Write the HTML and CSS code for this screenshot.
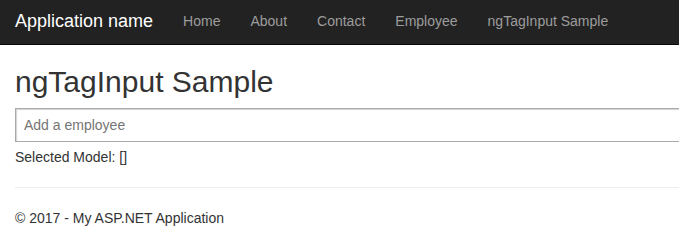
FILE: index.html
```html
<!DOCTYPE html>
<html lang="en">
<head>
  <meta charset="UTF-8" />
  <meta name="viewport" content="width=device-width, initial-scale=1.0" />
  <title>ngTagInput Sample - My ASP.NET Application</title>
  <link rel="stylesheet" href="styles.css">
</head>
<body>
  <div class="navbar">
    <a class="navbar-brand" href="#">Application name</a>
    <ul class="nav">
      <li><a href="#">Home</a></li>
      <li><a href="#">About</a></li>
      <li><a href="#">Contact</a></li>
      <li><a href="#">Employee</a></li>
      <li><a href="#">ngTagInput Sample</a></li>
    </ul>
  </div>

  <div class="body-content">
    <h2>ngTagInput Sample</h2>
    <div class="tags-host">
      <div class="tags">
        <input class="tag-input" type="text" placeholder="Add a employee">
      </div>
    </div>
    <div class="model">Selected Model: []</div>

    <hr />
    <footer>
      <p>&copy; 2017 - My ASP.NET Application</p>
    </footer>
  </div>
</body>
</html>
```

FILE: styles.css
```css
body {
  margin: 0;
  font-family: "Liberation Sans", Arial, sans-serif;
  font-size: 14px;
  line-height: 20px;
  color: #333;
  background-color: #fff;
  overflow: hidden;
}
.navbar {
  display: flex;
  align-items: center;
  height: 44px;
  padding-bottom: 2px;
  box-sizing: border-box;
  height: 45px;
  background-color: #222;
  border-bottom: 1px solid #080808;
}
.navbar-brand {
  padding: 0 15px;
  font-size: 18px;
  color: #fff;
  text-decoration: none;
}
.nav {
  display: flex;
  margin: 0;
  padding: 0;
  list-style: none;
}
.nav a {
  display: block;
  padding: 0 15px;
  color: #9d9d9d;
  text-decoration: none;
}
.nav a:hover { color: #fff; }
/* the page runs on past the right edge, so no right padding here */
.body-content { padding-left: 15px; }
h2 {
  margin: 20px 0 10px;
  font-size: 30px;
  font-weight: 500;
  line-height: 33px;
}
.tags-host { margin: 0 0 5px; }
.tags {
  padding: 1px;
  background-color: #fff;
  border: 1px solid #a9a9a9;
  border-right: 0;
  box-shadow: 1px 1px 1px 0 lightgray inset;
  overflow: hidden;
}
.tag-input {
  display: block;
  height: 26px;
  margin: 2px;
  padding: 0 0 0 5px;
  border: 0;
  outline: none;
  font: 14px "Liberation Sans", Arial, sans-serif;
  color: #333;
  background: transparent;
}
.tag-input::placeholder { color: #757575; }
hr {
  margin: 20px 0;
  border: 0;
  border-top: 1px solid #eee;
}
footer p { margin: 0 0 10px; }
```
